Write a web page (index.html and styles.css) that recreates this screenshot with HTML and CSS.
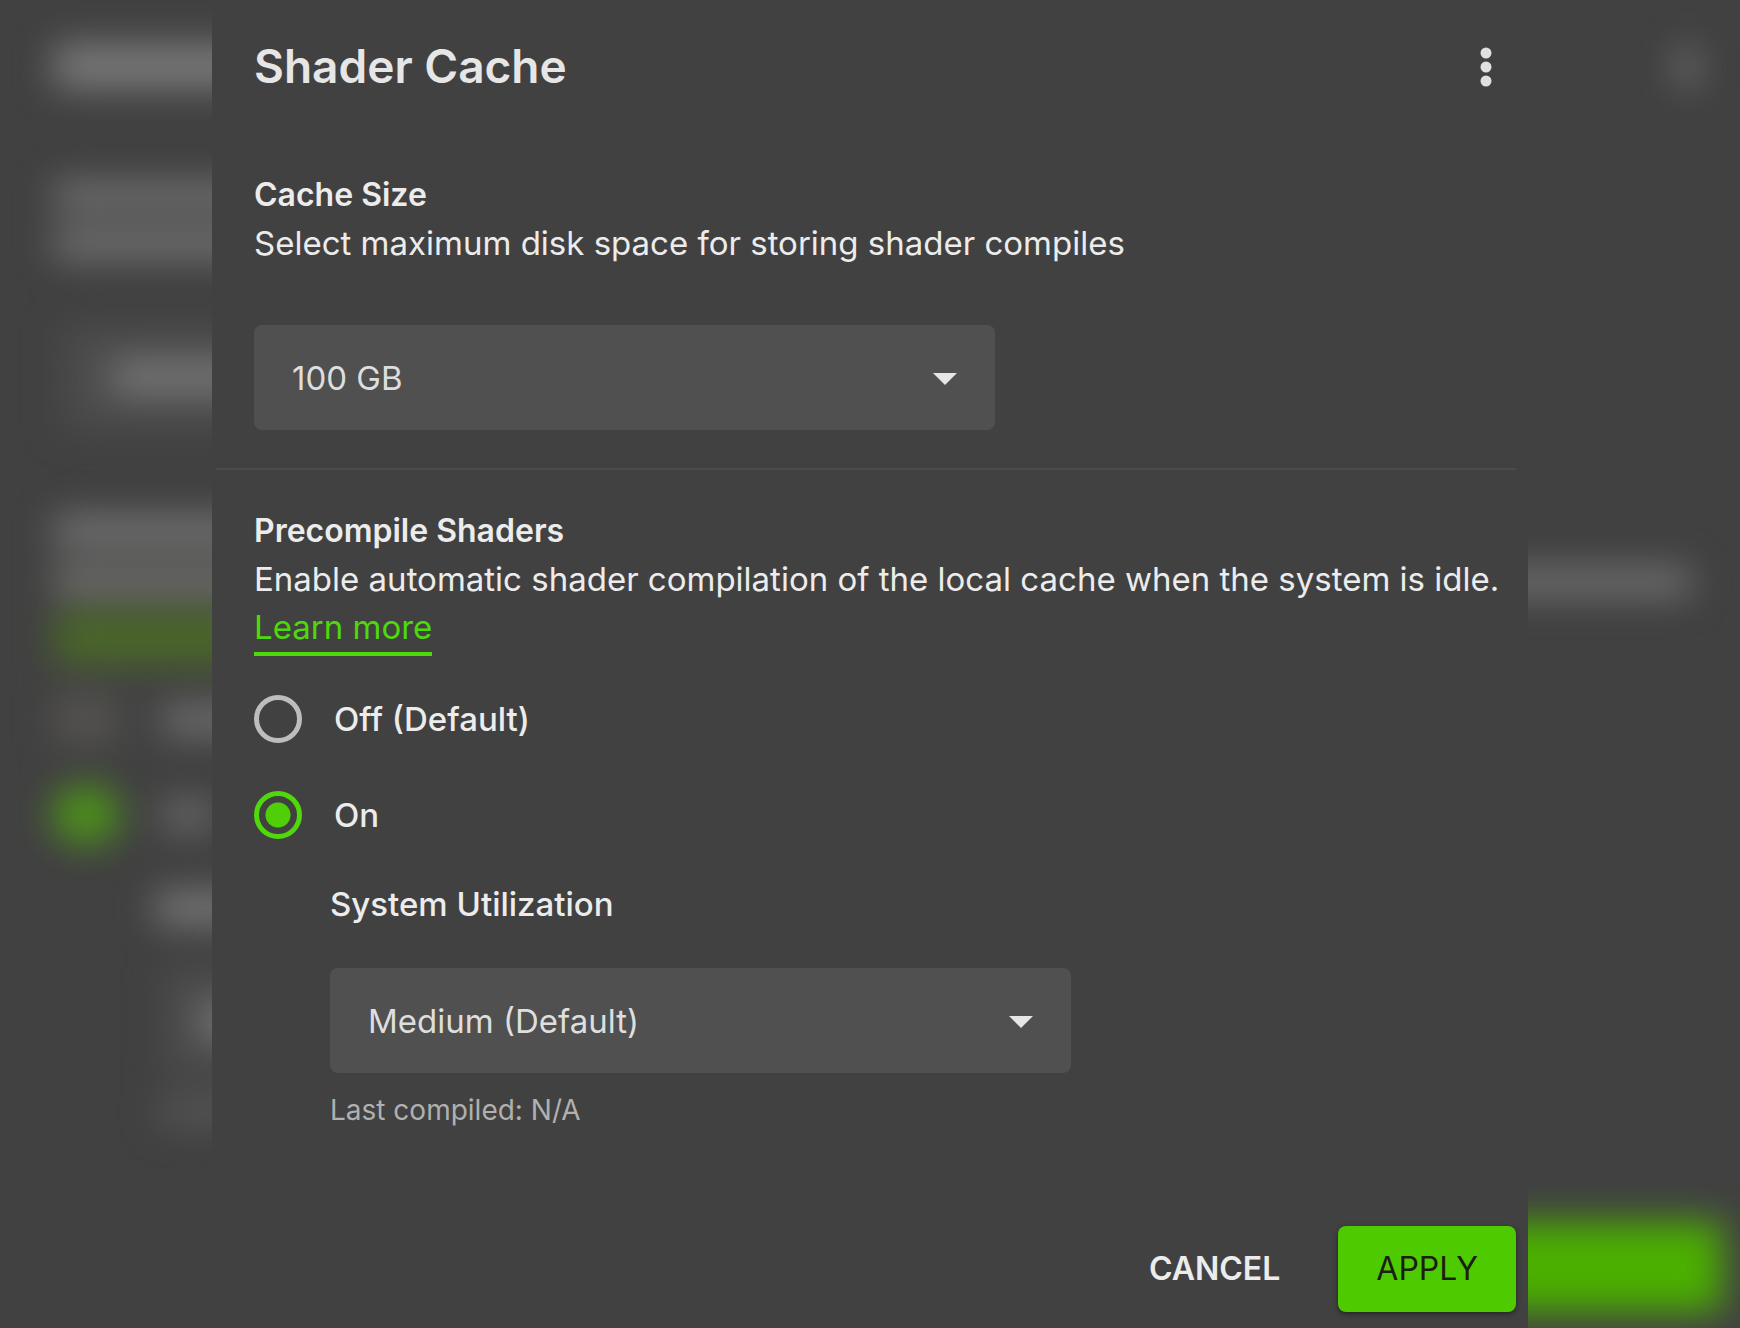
FILE: index.html
```
<!DOCTYPE html>
<html lang="en">
<head>
    <meta charset="UTF-8">
    <meta name="viewport" content="width=device-width, initial-scale=1.0">
    <title>Shader Cache</title>
    <link rel="stylesheet" href="styles.css">
</head>
<body>

<!-- Blurred backdrop behind the panel -->
<svg class="backdrop" viewBox="0 0 1740 1328" preserveAspectRatio="none" aria-hidden="true">
    <defs>
        <filter id="blur" filterUnits="userSpaceOnUse" x="-100" y="-100" width="1940" height="1528" color-interpolation-filters="sRGB">
            <feGaussianBlur stdDeviation="18"/>
        </filter>
    </defs>
    <g filter="url(#blur)">
        <rect x="54" y="44" width="300" height="44" fill="#7a7a7a"/>
        <rect x="54" y="182" width="300" height="28" fill="#737373"/>
        <rect x="54" y="230" width="300" height="28" fill="#767676"/>
        <rect x="62" y="325" width="400" height="105" fill="#4c4c4c"/>
        <rect x="112" y="360" width="200" height="34" fill="#777"/>
        <rect x="54" y="516" width="300" height="30" fill="#767676"/>
        <rect x="54" y="566" width="300" height="30" fill="#72726f"/>
        <rect x="54" y="612" width="300" height="52" fill="#4b6828"/>
        <rect x="54" y="695" width="64" height="48" fill="#555351"/>
        <rect x="162" y="705" width="150" height="30" fill="#707070"/>
        <ellipse cx="86" cy="815" rx="34" ry="30" fill="#4d921a"/>
        <rect x="162" y="800" width="52" height="30" fill="#6a6a6a"/>
        <rect x="156" y="892" width="200" height="32" fill="#7a7a7a"/>
        <rect x="164" y="968" width="200" height="105" fill="#4c4c4c"/>
        <rect x="202" y="1004" width="200" height="34" fill="#7c7c7c"/>
        <rect x="160" y="1096" width="200" height="30" fill="#565656"/>
        <rect x="1680" y="48" width="14" height="38" fill="#8a8a8a"/>
        <rect x="1400" y="568" width="290" height="28" fill="#727272"/>
        <rect x="1488" y="1222" width="234" height="90" fill="#4bb000"/>
    </g>
</svg>

<main class="panel">
    <header class="panel-header">
        <h1>Shader Cache</h1>
        <button class="menu-button" type="button" aria-label="More options">
            <svg width="12" height="40" viewBox="0 0 12 40">
                <circle cx="6" cy="6" r="5.5"/>
                <circle cx="6" cy="20" r="5.5"/>
                <circle cx="6" cy="34" r="5.5"/>
            </svg>
        </button>
    </header>

    <section class="section cache-size">
        <h2><label for="cache-size">Cache Size</label></h2>
        <p>Select maximum disk space for storing shader compiles</p>
        <div class="select">
            <select id="cache-size">
                <option>100 GB</option>
            </select>
            <svg class="arrow" width="24" height="12" viewBox="0 0 24 12"><path d="M0 0h24L12 12z"/></svg>
        </div>
    </section>

    <section class="section precompile">
        <h2 id="precompile-title">Precompile Shaders</h2>
        <p>Enable automatic shader compilation of the local cache when the system is idle. <a href="#">Learn more</a></p>
        <div class="radio-group" role="radiogroup" aria-labelledby="precompile-title">
            <label class="radio"><input type="radio" name="precompile" value="off">Off (Default)</label>
            <label class="radio"><input type="radio" name="precompile" value="on" checked>On</label>
        </div>
        <div class="utilization">
            <label for="utilization">System Utilization</label>
            <div class="select">
                <select id="utilization">
                    <option>Medium (Default)</option>
                </select>
                <svg class="arrow" width="24" height="12" viewBox="0 0 24 12"><path d="M0 0h24L12 12z"/></svg>
            </div>
            <p class="last-compiled">Last compiled: N/A</p>
        </div>
    </section>

    <footer class="actions">
        <button class="cancel" type="button">CANCEL</button>
        <button class="apply" type="button">APPLY</button>
    </footer>
</main>

</body>
</html>
```
FILE: styles.css
```
* {
    box-sizing: border-box;
}
body {
    margin: 0;
    min-height: 100vh;
    background: #414141;
    color: #ececec;
    font-family: Inter, sans-serif;
    font-size: 33px;
    line-height: 48px;
}
h1, h2, p {
    margin: 0;
}
h1 {
    font-size: 46px;
    font-weight: 600;
    line-height: 58px;
    color: #e6e6e6;
}
h2 {
    font-size: 32px;
    font-weight: 600;
}
a {
    padding-bottom: 5px;
    border-bottom: 4px solid #4fd80a;
    color: #4fd80a;
    text-decoration: none;
}
label {
    font-weight: 500;
}
h2 label {
    font-weight: inherit;
}
button, select {
    font: inherit;
    border: 0;
    cursor: pointer;
}
.backdrop {
    position: absolute;
    top: 0;
    left: 0;
    width: 100%;
    height: 100%;
}
.panel {
    position: relative;
    display: flex;
    flex-direction: column;
    max-width: 1316px;
    min-height: 100vh;
    margin: 0 auto;
    padding: 37px 12px 16px 4px;
    background: #414141;
}
.panel-header {
    display: flex;
    justify-content: space-between;
    align-items: center;
    padding: 0 6px 0 38px;
}
.menu-button {
    display: flex;
    justify-content: center;
    align-items: center;
    width: 48px;
    height: 58px;
    padding: 2px 0 0;
    background: none;
    fill: #e0e0e0;
}
.section {
    padding-left: 38px;
}
.cache-size {
    margin-top: 76px;
    padding-bottom: 38px;
    border-bottom: 2px solid #4b4b4b;
}
.cache-size .select {
    margin-top: 58px;
}
.precompile {
    padding-top: 37px;
}
.select {
    position: relative;
    width: 100%;
    max-width: 741px;
}
.select select {
    display: block;
    width: 100%;
    height: 105px;
    padding: 0 80px 0 38px;
    border-radius: 8px;
    appearance: none;
    background: #505050;
    color: #dedede;
}
.arrow {
    position: absolute;
    top: 48px;
    right: 38px;
    fill: #e6e6e6;
    pointer-events: none;
}
.radio-group {
    display: flex;
    flex-direction: column;
    align-items: flex-start;
    gap: 48px;
    margin-top: 44px;
}
.radio {
    display: flex;
    align-items: center;
    gap: 32px;
}
.radio input {
    width: 48px;
    height: 48px;
    margin: 0;
    border: 5px solid #bdbdbd;
    border-radius: 50%;
    appearance: none;
}
.radio input:checked {
    border-color: #4fd80a;
    background: radial-gradient(circle, #4ecf08 12px, transparent 13px);
}
.utilization {
    margin-top: 41px;
    padding-left: 76px;
}
.utilization .select {
    margin-top: 40px;
}
.last-compiled {
    margin-top: 19px;
    font-size: 28px;
    line-height: 36px;
    color: #b0b0b0;
}
.actions {
    display: flex;
    justify-content: flex-end;
    gap: 38px;
    margin-top: auto;
    padding-top: 90px;
}
.actions button {
    height: 86px;
    border-radius: 8px;
    font-size: 32px;
}
.cancel {
    padding: 0 20px;
    background: none;
    color: #ececec;
    font-weight: 600;
}
.actions .apply {
    padding: 0 38px;
    background: #4ecb00;
    box-shadow: 0 2px 5px rgba(0,0,0,0.45);
    color: #1a1f14;
}
```
